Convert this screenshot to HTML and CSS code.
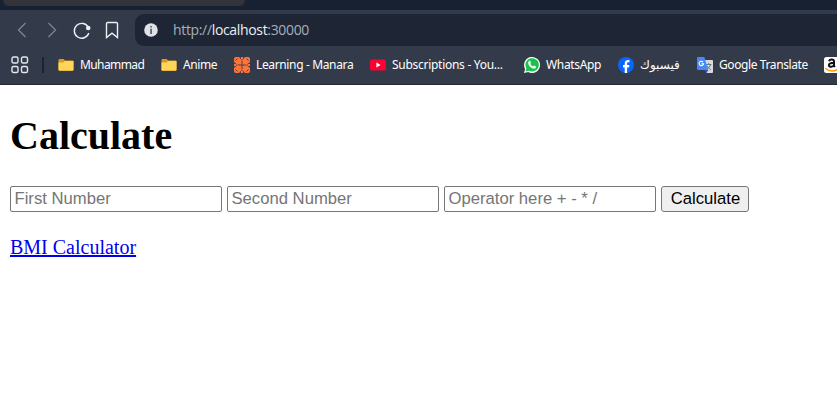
FILE: index.html
```html
<!DOCTYPE html>
<html lang="en">
<head>
<meta charset="utf-8">
<title>Calculate</title>
<link rel="stylesheet" href="styles.css">
</head>
<body>
<header class="chrome">
  <div class="tabstrip"><div class="tab"></div></div>
  <div class="toolbar">
    <nav class="nav">
      <svg class="dim" width="20" height="20" viewBox="0 0 20 20"><path d="M13.500 3 6.500 10l7 7"/></svg>
      <svg class="dim" width="20" height="20" viewBox="0 0 20 20"><path d="m6.500 3 7 7-7 7"/></svg>
      <svg width="20" height="20" viewBox="0 0 20 20"><path d="M16.400 7.600A7.400 7.400 0 1 0 16.800 13"/><circle class="dot" cx="16.200" cy="8" r="2.300"/></svg>
      <svg width="20" height="20" viewBox="0 0 20 20"><path d="M4.500 3.700a1.200 1.200 0 0 1 1.200-1.200h8.600a1.200 1.200 0 0 1 1.200 1.200v13.800L10 13.200l-5.500 4.300z"/></svg>
    </nav>
    <div class="address">
      <svg width="14" height="14" viewBox="0 0 14 14"><circle cx="7" cy="7" r="6.800" fill="#dfe1e7"/><path d="M6.200 3h1.700v1.600H6.200zM6.200 5.800h1.700V11H6.200z" fill="#555b68"/></svg>
      <span class="url">http://<b>localhost</b>:30000</span>
    </div>
  </div>
  <div class="bookmarks">
    <svg class="apps" width="18" height="18" viewBox="0 0 18 18"><rect x="1" y="1" width="6" height="6" rx="1.600"/><rect x="10.500" y="1" width="6" height="6" rx="1.600"/><rect x="1" y="10.500" width="6" height="6" rx="1.600"/><rect x="10.500" y="10.500" width="6" height="6" rx="1.600"/></svg>
    <i class="divider"></i>
    <div class="mark muhammad"><svg viewBox="0 0 16 16"><path fill="#d99b20" d="M.5 3a1 1 0 0 1 1-1h4l1.700 1.500h7.300a1 1 0 0 1 1 1V13a1 1 0 0 1-1 1h-13a1 1 0 0 1-1-1z"/><path fill="#ffd65a" d="M.5 5.500h5L7 4h8.500v8.500a1 1 0 0 1-1 1h-13a1 1 0 0 1-1-1z"/></svg><span>Muhammad</span></div>
    <div class="mark anime"><svg viewBox="0 0 16 16"><path fill="#d99b20" d="M.5 3a1 1 0 0 1 1-1h4l1.700 1.500h7.300a1 1 0 0 1 1 1V13a1 1 0 0 1-1 1h-13a1 1 0 0 1-1-1z"/><path fill="#ffd65a" d="M.5 5.500h5L7 4h8.500v8.500a1 1 0 0 1-1 1h-13a1 1 0 0 1-1-1z"/></svg><span>Anime</span></div>
    <div class="mark learning"><svg viewBox="0 0 16 16"><rect width="16" height="16" rx="2" fill="#ff7539"/><path d="M8 4v8M4 8h8" stroke="#553f42" stroke-width="1"/><path d="M5 0 8 3.800 11 0zM5 16l3-3.800 3 3.800zM0 5l3.800 3L0 11zM16 5l-3.800 3 3.800 3z" fill="#4b3d45"/><path d="M8 0v2.500M8 13.500V16M0 8h2.500M13.500 8H16" stroke="#ff7539" stroke-width="2"/><path d="m1.500 3.500 2-2M12.500 1.500l2 2M1.500 12.500l2 2M12.500 14.500l2-2" stroke="#4b3d45" stroke-width="1"/></svg><span>Learning - Manara</span></div>
    <div class="mark subscriptions"><svg viewBox="0 0 16 16"><rect y="2.400" width="16" height="11.200" rx="2.600" fill="#ff0033"/><path d="m6.400 5.600 4.200 2.400-4.200 2.400z" fill="#fff"/></svg><span>Subscriptions - You...</span></div>
    <div class="mark whatsapp"><svg viewBox="0 0 16 16"><path d="m0 16 1.100-4.100A8 8 0 1 1 4.200 15z" fill="#fff"/><path d="m1.500 14.500.9-3.200a6.700 6.700 0 1 1 2.500 2.400z" fill="#18c34a"/><path d="M5.200 4.100c.5-.4.9-.3 1.100.2l.6 1.400c.1.4-.7 1-.6 1.300.6 1.200 1.500 2 2.700 2.500.4.1.9-1 1.300-.9l1.500.8c.7.3 0 1.600-.7 2-1.200.6-3.300-.1-5-1.700C4.400 8.100 3.400 5.500 5.200 4.100z" fill="#fff"/></svg><span>WhatsApp</span></div>
    <div class="mark facebook"><svg viewBox="0 0 16 16"><circle cx="8" cy="8" r="8" fill="#0866ff"/><path d="M6.700 15.900V10.400H5V8h1.700V6.700c0-2.500 1.200-3.700 3.500-3.700.5 0 1 .1 1.300.2v2.100h-.9c-1.100 0-1.500.4-1.500 1.500V8h2.300l-.4 2.400H9.100v5.500z" fill="#fff"/></svg><span lang="ar" dir="rtl">فيسبوك</span></div>
    <div class="mark translate"><svg viewBox="0 0 16 16"><path d="M6 3h9a1 1 0 0 1 1 1v11a1 1 0 0 1-1 1H9.500z" fill="#d8d9dc"/><path d="M9 7.500h5.500M11.700 6v1.500M13.500 7.500c-.4 2-1.800 3.800-3.600 5M10.200 9c.7 1.600 2 2.700 3.700 3.700" stroke="#66798b" stroke-width="1" fill="none"/><path d="M1 0h6.300l4 13H1a1 1 0 0 1-1-1V1a1 1 0 0 1 1-1z" fill="#4988ef"/><path d="M8 13h3.300L9.500 16z" fill="#2557c8"/><path d="M6.100 5.100A2.200 2.200 0 1 0 6.500 6.800H4.500" stroke="#fff" stroke-width="1.100" fill="none"/></svg><span>Google Translate</span></div>
    <div class="mark amazon"><svg viewBox="0 0 16 16"><rect width="16" height="16" rx="2.500" fill="#fff"/><path d="M5 4.200C5.700 1.900 10 1.900 10 4.500v4.200l.9 1.300M10 5.700c-3.300 0-5.100.8-5.100 2.500 0 2.400 4.300 2.200 5.100-.5" stroke="#111" stroke-width="2" fill="none"/><path d="M1.300 11.300c4 3.500 8.700 3.500 13 .6" stroke="#ff9900" stroke-width="1.500" fill="none"/></svg></div>
  </div>
</header>
<main>
  <h1>Calculate</h1>
  <form>
    <input type="text" placeholder="First Number">
    <input type="text" placeholder="Second Number">
    <input type="text" placeholder="Operator here + - * /">
    <button type="button">Calculate</button>
  </form>
  <a href="#">BMI Calculator</a>
</main>
</body>
</html>
```
FILE: styles.css
```css
* { box-sizing: border-box; }
body { margin: 0; background: #fff; overflow: hidden; font-family: "Liberation Serif", serif; }
.chrome { height: 85px; background: #333b4b; border-bottom: 1px solid #292a33; overflow: hidden; }
.tabstrip { height: 10px; background: #182131; }
.tab { width: 242px; height: 6px; margin-left: 3px; background: #333439; border-radius: 0 0 6px 6px; }
.toolbar { display: flex; height: 36px; padding-top: 4px; }
.nav { display: flex; align-items: center; gap: 10px; width: 135px; padding-left: 12px; height: 32px; }
.nav svg { fill: none; stroke: #eceef2; stroke-width: 1.4; }
.nav .dim { stroke: #7b818c; }
.nav .dot { fill: #eceef2; stroke: none; }
.address { flex: 1; display: flex; align-items: center; height: 32px; padding-left: 9px; gap: 15px; background: #1e2636; border-radius: 9px 0 0 9px; }
.url { font: 14px "Open Sans", sans-serif; color: #a9adb6; white-space: nowrap; letter-spacing: -.34px; padding-bottom: 2px; }
.url b { font-weight: 400; color: #eceef2; }
.bookmarks { display: flex; align-items: center; height: 38px; padding-left: 11px; }
.apps { fill: none; stroke: #e5e7ec; stroke-width: 1.4; flex: none; }
.divider { width: 2px; height: 16px; margin: 0 14px 0 13px; background: #1b2433; flex: none; }
.mark { display: flex; align-items: center; gap: 6px; flex: none; font: 12px "Noto Sans", "DejaVu Sans", sans-serif; color: #fff; white-space: nowrap; }
.mark svg { width: 16px; height: 16px; flex: none; }
.mark span { padding-bottom: 1px; }
.muhammad { width: 103px; letter-spacing: -.6px; }
.anime { width: 73px; letter-spacing: -.4px; }
.learning { width: 136px; letter-spacing: -.36px; }
.subscriptions { width: 154px; letter-spacing: -.28px; }
.whatsapp { width: 94px; letter-spacing: -.35px; }
.facebook { width: 79px; }
.translate { width: 127px; letter-spacing: -.4px; }
.amazon { width: 16px; }
main { padding: 0 10px; }
h1 { margin: 28px 0 27px; font-size: 40px; line-height: 46px; }
form { display: flex; gap: 5px; height: 26px; }
input, button { margin: 0; height: 26px; font: 16.667px/19px "Liberation Sans", sans-serif; }
input { width: 212px; padding: 0 3px 1px 3.5px; border: 1px solid #767676; border-radius: 2px; }
input::placeholder { color: #757575; }
button { width: 88px; padding: 0 0 1px 1px; border: 1px solid #767676; border-radius: 3px; background: #efefef; color: #000; }
main a { display: inline-block; margin-top: 24px; font-size: 20px; line-height: 23px; color: #0000ee; }
```
